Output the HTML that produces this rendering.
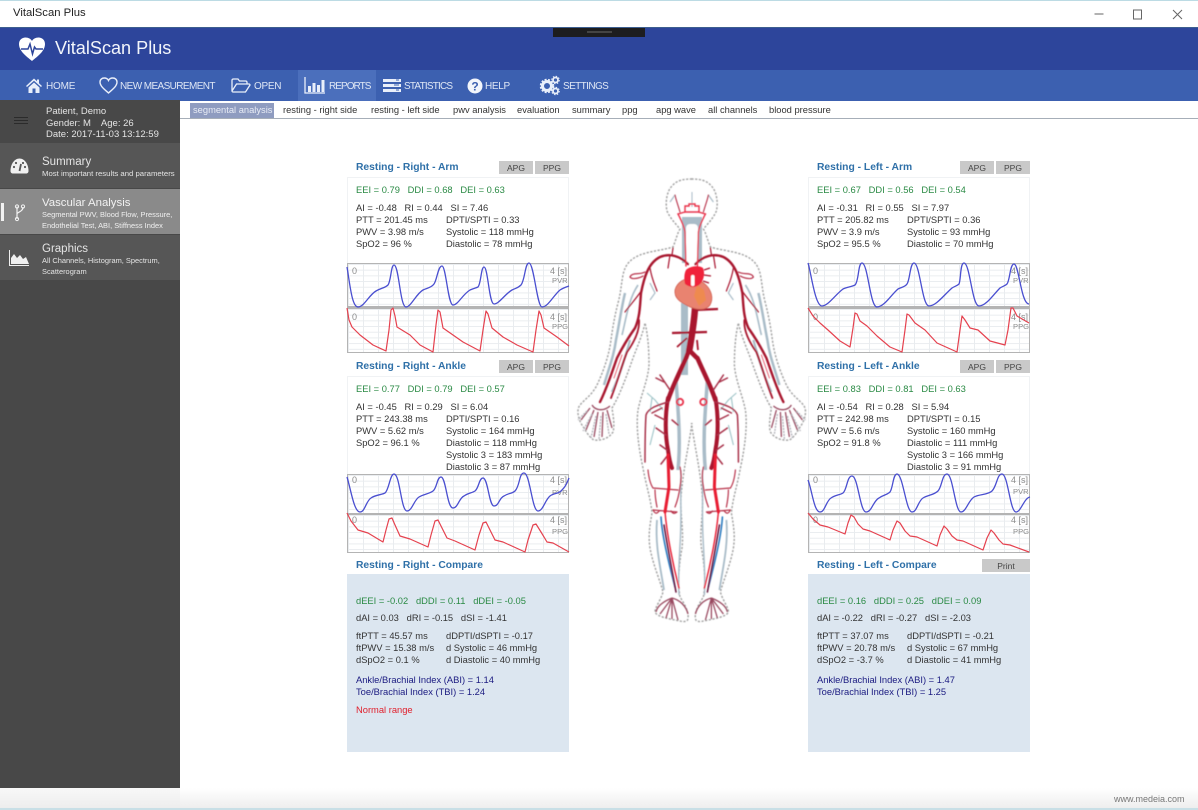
<!DOCTYPE html>
<html><head><meta charset="utf-8"><title>VitalScan Plus</title>
<style>
html,body{margin:0;padding:0}
body{width:1198px;height:810px;position:relative;overflow:hidden;background:#fff;font-family:"Liberation Sans",sans-serif;color:#222}
.a{position:absolute}
.t{position:absolute;font-size:9.35px;line-height:12px;white-space:nowrap;color:#333}
.g{color:#2a8a44}
.n{color:#1a1a80}
.h{position:absolute;font-size:10.3px;line-height:14px;font-weight:bold;color:#2f70a8;white-space:nowrap}
.b{position:absolute;height:13px;background:#c9c9c9;color:#444;font-size:8.5px;line-height:14px;text-align:center}
.nv{position:absolute;top:80px;font-size:10px;line-height:13px;color:#dfe7f5;white-space:nowrap;letter-spacing:-.6px}
.tb{position:absolute;top:104px;font-size:9.35px;line-height:13px;color:#333;white-space:nowrap}
.s{position:absolute;color:#e4e4e4;white-space:nowrap}
.gr{position:absolute;box-sizing:border-box;border:1px solid #b4b4b4;background-color:#fff;background-image:linear-gradient(to right,#e9ecef 1px,transparent 1px),linear-gradient(to bottom,#e9ecef 1px,transparent 1px);background-size:15px 100%,100% 5.7px}
.l{position:absolute;font-size:9px;line-height:10px;color:#8c8c8c;white-space:nowrap}
.m{font-size:7.6px}
.p{position:absolute;background:#fff;border:1px solid #f0f2f4;box-sizing:border-box}
svg{position:absolute;overflow:visible}
</style></head><body>

<!-- window chrome -->
<div class="a" style="left:0;top:0;width:1198px;height:1px;background:#bcdbe4"></div>
<div class="a" style="left:13px;top:7px;font-size:11.3px;line-height:13px;color:#222">VitalScan Plus</div>
<svg style="left:1090px;top:6px" width="100" height="16"><path d="M4.500,8H13.500" stroke="#666" stroke-width="1"/><rect x="43.500" y="4" width="8" height="9" fill="none" stroke="#666"/><path d="M83,4l9,9M92,4l-9,9" stroke="#666" stroke-width="1" fill="none"/></svg>

<!-- header -->
<div class="a" style="left:0;top:27px;width:1198px;height:43px;background:#2d459b;border-top:1px solid #3d5f90;box-sizing:border-box"></div>
<div class="a" style="left:553px;top:28px;width:92px;height:9px;background:#1d1d1f"></div>
<div class="a" style="left:587px;top:31px;width:25px;height:2px;background:#444"></div>
<svg style="left:18px;top:37px" width="28" height="24" viewBox="0 0 28 24"><path d="M14,24C8,19 1,14 1,7C1,3 4,0.500 7.500,0.500C10.500,0.500 13,2 14,4C15,2 17.500,0.500 20.500,0.500C24,0.500 27,3 27,7C27,14 20,19 14,24Z" fill="#fff"/><path d="M3,12H10L12,7L14.500,17L16.500,10L18,12H25" fill="none" stroke="#2d459b" stroke-width="1.500"/></svg>
<div class="a" style="left:55px;top:38px;font-size:18.100px;line-height:20px;color:#f2f5fb;white-space:nowrap">VitalScan Plus</div>

<!-- nav -->
<div class="a" style="left:0;top:70px;width:1198px;height:31px;background:#3c60b0"></div>
<div class="a" style="left:298px;top:70px;width:78px;height:31px;background:#4b6fbc"></div>
<svg style="left:26px;top:78px" width="16" height="15" viewBox="0 0 16 15"><path d="M0,8L8,0.500L11,3.300V1.500H13V5.200L16,8L15,9L8,2.800L1,9Z M2.500,9.500L8,4.500L13.500,9.500V15H9.500V10.500H6.500V15H2.500Z" fill="#e9effa"/></svg>
<div class="nv" style="left:46px;letter-spacing:-.2px">HOME</div>
<svg style="left:99px;top:77px" width="19" height="17" viewBox="0 0 19 17"><path d="M9.500,16C5,12 1,9 1,5C1,2.500 3,1 5.200,1C7,1 8.800,2 9.500,3.500C10.200,2 12,1 13.800,1C16,1 18,2.500 18,5C18,9 14,12 9.500,16Z" fill="none" stroke="#e9effa" stroke-width="1.400"/></svg>
<div class="nv" style="left:120px">NEW MEASUREMENT</div>
<svg style="left:231px;top:78px" width="20" height="15" viewBox="0 0 20 15"><path d="M1,13V2.500C1,1.500 1.500,1 2.500,1H7L8.500,3H14.500C15.500,3 16,3.500 16,4.500V6 M1,13C1,13.500 1.500,14 2,14H14.500L19,7C19,6.500 18.500,6 18,6H5.500L1,13Z" fill="none" stroke="#e9effa" stroke-width="1.300"/></svg>
<div class="nv" style="left:254px;letter-spacing:-.3px">OPEN</div>
<svg style="left:304px;top:77px" width="21" height="17" viewBox="0 0 21 17"><path d="M1,0V16H21" fill="none" stroke="#e9effa" stroke-width="1.300"/><path d="M4,9h3v6H4zM8.500,6h3v9h-3zM13,8h3v7h-3zM17.500,3h3v12h-3z" fill="#e9effa"/></svg>
<div class="nv" style="left:329px;letter-spacing:-.95px">REPORTS</div>
<svg style="left:383px;top:78px" width="18" height="15" viewBox="0 0 18 15"><path d="M0,1h18v3H0zM0,6h18v3H0zM0,11h18v3H0z" fill="#e9effa"/><path d="M13,2h3M11,7h5M13,12h3" stroke="#3c60b0" stroke-width="1"/></svg>
<div class="nv" style="left:404px;letter-spacing:-.8px">STATISTICS</div>
<svg style="left:467px;top:78px" width="16" height="16" viewBox="0 0 16 16"><circle cx="8" cy="8" r="7.500" fill="#f2f5fb"/><text x="8" y="12.500" text-anchor="middle" font-family="Liberation Sans" font-size="12" font-weight="bold" fill="#3c60b0">?</text></svg>
<div class="nv" style="left:485px;letter-spacing:-.3px">HELP</div>
<svg style="left:540px;top:76px" width="20" height="19" viewBox="0 0 20 19"><circle cx="7" cy="10" r="4.500" fill="none" stroke="#e9effa" stroke-width="3"/><circle cx="7" cy="10" r="6.500" fill="none" stroke="#e9effa" stroke-width="1.500" stroke-dasharray="2 1.500"/><circle cx="15.500" cy="4" r="2.500" fill="none" stroke="#e9effa" stroke-width="1.800"/><circle cx="15.500" cy="15" r="2.500" fill="none" stroke="#e9effa" stroke-width="1.800"/><circle cx="15.500" cy="4" r="3.800" fill="none" stroke="#e9effa" stroke-width="1" stroke-dasharray="1.500 1.500"/><circle cx="15.500" cy="15" r="3.800" fill="none" stroke="#e9effa" stroke-width="1" stroke-dasharray="1.500 1.500"/></svg>
<div class="nv" style="left:563px;letter-spacing:-.6px">SETTINGS</div>

<!-- tabs -->
<div class="a" style="left:180px;top:118px;width:1018px;height:1px;background:#a6aeb8"></div>
<div class="a" style="left:190px;top:103px;width:84px;height:15px;background:#8f9cc0"></div>
<div class="tb" style="left:193px;color:#e8ecf5">segmental analysis</div>
<div class="tb" style="left:283px">resting - right side</div>
<div class="tb" style="left:371px">resting - left side</div>
<div class="tb" style="left:453px">pwv analysis</div>
<div class="tb" style="left:517px">evaluation</div>
<div class="tb" style="left:572px">summary</div>
<div class="tb" style="left:622px">ppg</div>
<div class="tb" style="left:656px">apg wave</div>
<div class="tb" style="left:708px">all channels</div>
<div class="tb" style="left:769px">blood pressure</div>

<!-- sidebar -->
<div class="a" style="left:0;top:100px;width:180px;height:688px;background:#484848"></div>
<div class="a" style="left:0;top:143px;width:180px;height:45px;background:#565656"></div>
<div class="a" style="left:0;top:189px;width:180px;height:45px;background:#8a8a8a"></div>
<div class="a" style="left:0;top:235px;width:180px;height:45px;background:#565656"></div>
<div class="a" style="left:1px;top:203px;width:3px;height:18px;background:#f2f2f2"></div>
<svg style="left:14px;top:116px" width="14" height="9"><path d="M0,1.500H14M0,4.500H14M0,7.500H14" stroke="#2b2b2b" stroke-width="1"/></svg>
<div class="s" style="left:46px;top:106px;font-size:9.500px;line-height:11.500px">Patient, Demo<br>Gender: M &nbsp;&nbsp; Age: 26<br>Date: 2017-11-03 13:12:59</div>
<svg style="left:10px;top:158px" width="19" height="16" viewBox="0 0 19 16"><path d="M0.500,13C0.500,6 4.500,0.500 9.500,0.500C14.500,0.500 18.500,6 18.500,13C18.500,14.500 17.500,15.500 16,15.500H3C1.500,15.500 0.500,14.500 0.500,13Z" fill="#f0f0f0"/><path d="M9.500,13L11,6" stroke="#565656" stroke-width="1.800"/><circle cx="4" cy="9" r="1.100" fill="#565656"/><circle cx="6" cy="5" r="1.100" fill="#565656"/><circle cx="13" cy="5" r="1.100" fill="#565656"/><circle cx="15" cy="9" r="1.100" fill="#565656"/></svg>
<div class="s" style="left:42px;top:155px;font-size:11.500px;line-height:14px">Summary</div>
<div class="s" style="left:42px;top:169px;font-size:7.750px;line-height:10px">Most important results and parameters</div>
<svg style="left:14px;top:204px" width="12" height="17" viewBox="0 0 12 17"><path d="M3,2.500V15M3,10C3,8 9,8 9,3" fill="none" stroke="#f2f2f2" stroke-width="1.200"/><circle cx="3" cy="2.500" r="1.600" fill="none" stroke="#f2f2f2"/><circle cx="9" cy="2.500" r="1.600" fill="none" stroke="#f2f2f2"/><circle cx="3" cy="15" r="1.600" fill="none" stroke="#f2f2f2"/></svg>
<div class="s" style="left:42px;top:196px;font-size:11.400px;line-height:14px;color:#f2f2f2">Vascular Analysis</div>
<div class="s" style="left:42px;top:210px;font-size:7.450px;line-height:10.500px;color:#f0f0f0">Segmental PWV, Blood Flow, Pressure,<br>Endothelial Test, ABI, Stiffness Index</div>
<svg style="left:9px;top:250px" width="20" height="16" viewBox="0 0 20 16"><path d="M0.500,0V15.500H20" fill="none" stroke="#f0f0f0" stroke-width="1"/><path d="M2,14V8L5,4L8,8L11,5L14,9L17,7L20,14Z" fill="#f0f0f0"/></svg>
<div class="s" style="left:42px;top:242px;font-size:11.500px;line-height:14px">Graphics</div>
<div class="s" style="left:42px;top:256px;font-size:7.450px;line-height:10.500px">All Channels, Histogram, Spectrum,<br>Scatterogram</div>

<!-- bottom bar -->
<div class="a" style="left:180px;top:788px;width:1018px;height:22px;background:linear-gradient(#fff,#ececec)"></div>
<div class="a" style="left:0;top:788px;width:180px;height:22px;background:linear-gradient(#f8f8f8,#ececec)"></div>
<div class="a" style="left:0;top:808px;width:1198px;height:2px;background:#c8dfe6"></div>
<div class="a" style="left:1114px;top:794px;font-size:9px;line-height:11px;color:#777">www.medeia.com</div>

<!-- panel boxes -->
<div class="p" style="left:347px;top:177px;width:222px;height:87px"></div>
<div class="p" style="left:808px;top:177px;width:222px;height:87px"></div>
<div class="p" style="left:347px;top:376px;width:222px;height:99px"></div>
<div class="p" style="left:808px;top:376px;width:222px;height:99px"></div>
<div class="a" style="left:347px;top:574px;width:222px;height:178px;background:#dce6f0"></div>
<div class="a" style="left:808px;top:574px;width:222px;height:178px;background:#dce6f0"></div>

<!-- graph backgrounds -->
<div class="gr" style="left:347px;top:263px;width:222px;height:45px"></div>
<div class="gr" style="left:347px;top:308px;width:222px;height:45px"></div>
<div class="gr" style="left:808px;top:263px;width:222px;height:45px"></div>
<div class="gr" style="left:808px;top:308px;width:222px;height:45px"></div>
<div class="gr" style="left:347px;top:474px;width:222px;height:40px"></div>
<div class="gr" style="left:347px;top:514px;width:222px;height:39px"></div>
<div class="gr" style="left:808px;top:474px;width:222px;height:40px"></div>
<div class="gr" style="left:808px;top:514px;width:222px;height:39px"></div>
<div class="a" style="left:347px;top:306px;width:222px;height:3px;background:#b4b4b4"></div>
<div class="a" style="left:808px;top:306px;width:222px;height:3px;background:#b4b4b4"></div>

<!-- graph labels -->
<div class="l" style="left:352px;top:266px">0</div><div class="l" style="left:550px;top:266px">4 [s]</div><div class="l m" style="left:552px;top:276px">PVR</div>
<div class="l" style="left:352px;top:312px">0</div><div class="l" style="left:550px;top:312px">4 [s]</div><div class="l m" style="left:552px;top:322px">PPG</div>
<div class="l" style="left:813px;top:266px">0</div><div class="l" style="left:1011px;top:266px">4 [s]</div><div class="l m" style="left:1013px;top:276px">PVR</div>
<div class="l" style="left:813px;top:312px">0</div><div class="l" style="left:1011px;top:312px">4 [s]</div><div class="l m" style="left:1013px;top:322px">PPG</div>
<div class="l" style="left:352px;top:475px">0</div><div class="l" style="left:550px;top:475px">4 [s]</div><div class="l m" style="left:552px;top:488px">PVR</div>
<div class="l" style="left:352px;top:515px">0</div><div class="l" style="left:550px;top:515px">4 [s]</div><div class="l m" style="left:552px;top:527px">PPG</div>
<div class="l" style="left:813px;top:475px">0</div><div class="l" style="left:1011px;top:475px">4 [s]</div><div class="l m" style="left:1013px;top:487px">PVR</div>
<div class="l" style="left:813px;top:515px">0</div><div class="l" style="left:1011px;top:515px">4 [s]</div><div class="l m" style="left:1013px;top:527px">PPG</div>

<!-- waves and body drawing, page coordinates -->
<svg style="left:0;top:0" width="1198" height="810" viewBox="0 0 1198 810">
<defs><filter id="bl" x="-5%" y="-5%" width="110%" height="110%"><feGaussianBlur stdDeviation="0.45"/></filter></defs>
<g fill="none" stroke="#4a4fd0" stroke-width="1.300">
<path d="M347,267 C350,285 352,307 358,307 C364,307 369,295 376,291 C381,288 385,288 388,285 C391,281 391,265 394,265 C399,265 400,307 406,307 C411,307 416,294 423,290 C427,288 431,288 434,284 C437,280 438,266 442,266 C446,266 448,305 453,305 C458,305 462,295 470,290 C474,288 476,288 478,287 C481,284 481,267 484,267 C488,267 489,304 494,304 C499,304 505,294 512,290 C516,288 518,288 521,285 C525,280 525,263 529,263 C534,263 537,307 542,307 C548,307 553,296 560,290 C563,288 566,287 569,286"/>
<path d="M808,263 C811,272 815,306 822,306 C828,306 835,295 843,289 C847,287 851,287 855,285 C859,281 858,263 862,263 C868,263 870,307 877,307 C884,307 891,295 898,289 C902,287 905,287 907,284 C910,280 910,263 914,263 C920,263 922,306 929,306 C936,306 944,295 952,288 C955,286 957,286 959,284 C961,280 960,263 964,263 C970,263 972,306 979,306 C986,306 993,295 1000,288 C1003,286 1005,286 1007,284 C1010,280 1010,264 1014,264 C1019,264 1021,304 1029,304"/>
<path d="M347,477 C351,490 354,512 360,512 C365,512 366,501 371,498 C375,495 381,495 385,493 C389,490 390,474 394,474 C400,474 401,511 407,511 C412,511 414,500 419,497 C424,494 429,494 433,491 C437,488 437,477 441,477 C446,477 447,508 453,508 C458,508 459,498 464,496 C468,493 472,493 475,491 C479,488 479,478 483,478 C488,478 489,506 494,506 C499,506 499,498 504,496 C508,493 512,494 515,491 C520,486 519,473 524,473 C530,473 532,511 538,511 C543,511 545,500 550,496 C554,493 558,494 561,491 C564,488 566,486 569,478"/>
<path d="M808,480 C812,490 814,512 820,512 C825,512 826,501 831,498 C835,495 840,495 843,493 C847,490 847,476 852,476 C858,476 860,512 866,512 C872,512 873,501 879,498 C883,495 887,495 890,492 C893,488 893,474 897,474 C903,474 906,512 912,512 C917,512 918,501 923,498 C928,495 934,495 938,491 C942,487 942,474 947,474 C953,474 955,512 961,512 C966,512 968,501 974,497 C979,494 988,495 992,491 C997,486 997,474 1002,474 C1008,474 1010,512 1016,512 C1021,512 1024,498 1030,497"/>
</g>
<g fill="none" stroke="#e5424f" stroke-width="1.200" stroke-linejoin="round">
<path d="M347,308 L349,320 L352,327 L360,335 L373,345 L386,351 L389,330 L391,310 L393,308 L395,316 L397,327 L410,335 L420,345 L433,352 L436,325 L438,310 L440,312 L443,328 L453,335 L463,342 L480,351 L483,330 L486,311 L488,314 L492,328 L503,337 L517,345 L533,352 L536,330 L539,311 L541,315 L544,328 L557,337 L569,346"/>
<path d="M808,308 L813,316 L820,323 L828,330 L840,341 L850,347 L853,328 L855,313 L857,314 L860,321 L867,326 L877,336 L890,347 L902,352 L905,330 L907,314 L909,315 L915,323 L925,330 L937,343 L957,352 L960,330 L962,316 L965,320 L970,328 L978,330 L990,341 L1005,345 L1008,330 L1011,308 L1013,308 L1017,316 L1029,323"/>
<path d="M347,513 L351,521 L358,530 L368,533 L383,542 L386,530 L389,519 L392,518 L395,525 L400,536 L410,539 L428,547 L431,535 L435,521 L438,520 L442,528 L447,538 L455,541 L475,550 L479,535 L483,523 L486,522 L490,530 L495,540 L503,542 L525,552 L528,540 L533,525 L536,524 L541,532 L547,542 L553,543 L569,552"/>
<path d="M808,513 L813,519 L820,525 L828,527 L845,534 L848,523 L851,515 L854,517 L858,524 L863,529 L870,531 L890,540 L893,530 L897,521 L900,523 L905,531 L910,536 L917,537 L937,546 L940,535 L944,526 L947,529 L952,536 L957,540 L963,541 L983,550 L987,538 L991,530 L994,533 L999,540 L1003,544 L1010,545 L1029,552"/>
</g>

<g filter="url(#bl)">
<!-- body: centre -->
<rect x="681" y="303" width="7" height="72" fill="#a9bcc8"/>
<rect x="682" y="217" width="20" height="46" fill="#a9bcc8"/>
<rect x="686" y="224" width="12" height="40" rx="4" fill="#fff"/>
<path d="M692,192V207" stroke="#a9bcc8" stroke-width="1" fill="none"/>
<path d="M685,212V206H689V204H695V206H699V212Z" fill="none" stroke="#e8304a" stroke-width="1.400"/>
<g id="half">
<path d="M692,179 C684,179 677,180 672,186 C667,191 665,202 667,211 C670,218 675,223 680,229 C677,234 676,240 673,247 C664,250 650,251 640,255 C630,259 625,265 623,275 C621,285 621,292 618,303 C615,315 613,325 611,340 C609,355 604,370 597,385 C592,395 585,399 580,405 C576,410 578,420 584,428 C588,435 592,440 595,440 C603,441 610,437 613,432 C615,425 613,415 612,408 C620,395 627,375 633,358 C638,345 643,333 645,323 C648,335 649,350 649,365 C648,380 641,395 638,410 C636,425 638,445 643,468 C646,485 651,500 652,513 C650,525 648,535 650,548 C653,565 660,580 663,592 C661,600 655,607 655,612 C657,617 670,619 680,621 C684,622 688,622 688,618 C689,612 684,603 680,597 C678,585 678,570 682,548 C684,530 680,515 681,497 C683,470 689,445 692,423" fill="none" stroke="#a0a0a0" stroke-width="1.400" stroke-dasharray="2.200 1.500"/>
<g fill="none" stroke="#a9bcc8">
<path d="M625,293 C621,310 620,320 616,340 C614,355 610,365 604,385" stroke-width="2.500"/>
<path d="M638,285 C628,300 626,320 622,335" stroke-width="1.600"/>
<path d="M630,340 C626,355 620,375 612,392" stroke-width="2.200"/>
<path d="M676,380 C678,410 681,440 678,470" stroke-width="3.500"/>
<path d="M681,470 C680,490 682,515 680,545 C679,565 678,580 679,595" stroke-width="1.400"/>
<path d="M657,520 C655,545 660,565 664,590" stroke-width="1.800"/>
<path d="M647,393 L655,400 L663,410 M652,398 L650,412 M655,425 L650,445" stroke="#9fc4c8" stroke-width="1.100"/>
<path d="M675,195 L670,202 M650,283 L655,293 L650,300" stroke-width="1.200"/>
</g>
<g fill="none" stroke="#a8162e" stroke-linecap="round">
<path d="M688,264 C680,256 670,253 660,257 C648,263 644,278 641,293 C640,305 640,317 635,328 C628,338 622,348 617,358 C612,372 607,388 600,402" stroke-width="2.400"/>
<path d="M639,320 C640,332 632,345 627,352 C622,365 618,380 611,398" stroke-width="1.800"/>
<path d="M645,272 C640,275 632,272 630,277 C632,280 640,278 643,276" stroke-width="1.200" stroke="#b8324a"/>
<path d="M642,290 C635,300 630,305 625,312" stroke-width="1.200"/>
<path d="M650,268 C652,280 655,285 657,291" stroke-width="1.200"/>
<path d="M672,255 L673,248 M670,255 L668,268" stroke-width="1.200"/>
<path d="M622,355 L614,378" stroke="#e86070" stroke-width="1"/>
<path d="M686,266 L685,232 C684,225 680,218 678,214 L685,212" stroke="#e8304a" stroke-width="1.400"/>
<path d="M680,212 C678,205 676,200 675,195" stroke="#b8324a" stroke-width="1.100"/>
<path d="M686,358 C680,372 673,385 668,400" stroke-width="4.500"/>
<path d="M668,398 C665,415 665,435 668,450 C669,458 670,463 672,468" stroke-width="4"/>
<path d="M668,402 C658,405 648,408 646,415 C645,430 645,445 645,462" stroke="#a8324a" stroke-width="1.500"/>
<path d="M665,420 L655,415 M666,435 L656,428 M667,450 L660,445 M668,455 L661,464 M672,420 L678,425 M670,390 L660,375 M664,382 L656,378 M662,408 L652,413" stroke="#a8324a" stroke-width="1.500"/>
<path d="M648,470 C649,480 651,485 653,488 L678,490 M653,510 L677,512 M655,490 C655,497 656,502 657,507 M680,467 C682,475 681,482 680,487 C679,495 677,502 675,507 M653,510 C655,514 657,514 659,511 M677,512 C675,514 673,514 671,511" stroke="#b8324a" stroke-width="1.200"/>
<path d="M668,455 L669,487 L665,512" stroke="#e81f33" stroke-width="3"/>
<path d="M661,517 C662,535 668,560 675,587" stroke="#2a7cc0" stroke-width="1.600"/>
<path d="M664,525 C668,550 672,570 676,592" stroke="#6a1a40" stroke-width="1.600"/>
<path d="M665,512 C667,535 673,565 679,588" stroke="#e81f33" stroke-width="1.400"/>
<circle cx="680" cy="402" r="3.200" stroke="#e8304a" stroke-width="1.800"/>
</g>
<g fill="none" stroke="#9a4a60" stroke-width="1.300">
<path d="M592,405 C595,410 603,412 610,406 M590,408 L581,420 M594,410 L586,430 M598,412 L594,437 M603,412 L602,437 M607,410 L612,428"/>
<path d="M672,598 C662,602 657,607 656,612 M672,598 L660,614 M672,598 L666,618 M672,598 L672,619 M672,598 L678,620 M672,598 C680,600 686,606 688,614"/>
</g>
<g fill="none" stroke="#b4b4bc" stroke-width="1.400" stroke-dasharray="2 1">
<path d="M587,411 L578,420 M592,414 L583,431 M596,416 L591,438 M601,416 L599,439 M606,414 L609,434"/>
</g>
</g>
<use href="#half" transform="translate(1383.400,0) scale(-1,1)"/>

<!-- body: heart and aorta -->
<g fill="none" stroke="#a8162e">
<path d="M695,308 C694,325 691,340 689,352" stroke-width="6.500"/>
<path d="M689,350 L686,358 M689,350 L697,358" stroke-width="4.500"/>
<path d="M695,310 L718,309 M672,333 L707,332" stroke-width="2.200"/>
<path d="M677,347 L687,338 M698,350 L697,340" stroke-width="1.800"/>
</g>
<path d="M692,278 C685,278 677,282 675,290 C674,298 680,302 688,306 C696,310 706,311 710,305 C714,298 711,290 706,285 C702,281 697,279 692,278Z" fill="#e9836f" stroke="#d06055" stroke-width=".8"/>
<path d="M697,285 L704,290 L706,300 L699,306 L694,296Z" fill="#ee8a50"/>
<path d="M686,270 C690,266 699,265 703,268 C705,273 704,279 701,283 C697,288 690,288 685,284 C684,279 684,274 686,270Z" fill="#f0203a"/>
<rect x="691" y="275" width="3.500" height="11" rx="1.500" fill="#fff"/>
<path d="M704,270 L710,268 M704,275 L711,276 M703,281 L709,283" stroke="#a8162e" stroke-width="1.200" fill="none"/>
</g>
</svg>

<!-- RIGHT ARM -->
<div class="h" style="left:356px;top:161px">Resting - Right - Arm</div>
<div class="b" style="left:499px;top:161px;width:34px">APG</div><div class="b" style="left:535px;top:161px;width:34px">PPG</div>
<div class="t g" style="left:356px;top:184px">EEI = 0.79 &nbsp; DDI = 0.68 &nbsp; DEI = 0.63</div>
<div class="t" style="left:356px;top:202px">AI = -0.48 &nbsp; RI = 0.44 &nbsp; SI = 7.46</div>
<div class="t" style="left:356px;top:214px">PTT = 201.45 ms</div><div class="t" style="left:446px;top:214px">DPTI/SPTI = 0.33</div>
<div class="t" style="left:356px;top:226px">PWV = 3.98 m/s</div><div class="t" style="left:446px;top:226px">Systolic = 118 mmHg</div>
<div class="t" style="left:356px;top:238px">SpO2 = 96 %</div><div class="t" style="left:446px;top:238px">Diastolic = 78 mmHg</div>

<!-- LEFT ARM -->
<div class="h" style="left:817px;top:161px">Resting - Left - Arm</div>
<div class="b" style="left:960px;top:161px;width:34px">APG</div><div class="b" style="left:996px;top:161px;width:34px">PPG</div>
<div class="t g" style="left:817px;top:184px">EEI = 0.67 &nbsp; DDI = 0.56 &nbsp; DEI = 0.54</div>
<div class="t" style="left:817px;top:202px">AI = -0.31 &nbsp; RI = 0.55 &nbsp; SI = 7.97</div>
<div class="t" style="left:817px;top:214px">PTT = 205.82 ms</div><div class="t" style="left:907px;top:214px">DPTI/SPTI = 0.36</div>
<div class="t" style="left:817px;top:226px">PWV = 3.9 m/s</div><div class="t" style="left:907px;top:226px">Systolic = 93 mmHg</div>
<div class="t" style="left:817px;top:238px">SpO2 = 95.5 %</div><div class="t" style="left:907px;top:238px">Diastolic = 70 mmHg</div>

<!-- RIGHT ANKLE -->
<div class="h" style="left:356px;top:360px">Resting - Right - Ankle</div>
<div class="b" style="left:499px;top:360px;width:34px">APG</div><div class="b" style="left:535px;top:360px;width:34px">PPG</div>
<div class="t g" style="left:356px;top:383px">EEI = 0.77 &nbsp; DDI = 0.79 &nbsp; DEI = 0.57</div>
<div class="t" style="left:356px;top:401px">AI = -0.45 &nbsp; RI = 0.29 &nbsp; SI = 6.04</div>
<div class="t" style="left:356px;top:413px">PTT = 243.38 ms</div><div class="t" style="left:446px;top:413px">DPTI/SPTI = 0.16</div>
<div class="t" style="left:356px;top:425px">PWV = 5.62 m/s</div><div class="t" style="left:446px;top:425px">Systolic = 164 mmHg</div>
<div class="t" style="left:356px;top:437px">SpO2 = 96.1 %</div><div class="t" style="left:446px;top:437px">Diastolic = 118 mmHg</div>
<div class="t" style="left:446px;top:449px">Systolic 3 = 183 mmHg</div>
<div class="t" style="left:446px;top:461px">Diastolic 3 = 87 mmHg</div>

<!-- LEFT ANKLE -->
<div class="h" style="left:817px;top:360px">Resting - Left - Ankle</div>
<div class="b" style="left:960px;top:360px;width:34px">APG</div><div class="b" style="left:996px;top:360px;width:34px">PPG</div>
<div class="t g" style="left:817px;top:383px">EEI = 0.83 &nbsp; DDI = 0.81 &nbsp; DEI = 0.63</div>
<div class="t" style="left:817px;top:401px">AI = -0.54 &nbsp; RI = 0.28 &nbsp; SI = 5.94</div>
<div class="t" style="left:817px;top:413px">PTT = 242.98 ms</div><div class="t" style="left:907px;top:413px">DPTI/SPTI = 0.15</div>
<div class="t" style="left:817px;top:425px">PWV = 5.6 m/s</div><div class="t" style="left:907px;top:425px">Systolic = 160 mmHg</div>
<div class="t" style="left:817px;top:437px">SpO2 = 91.8 %</div><div class="t" style="left:907px;top:437px">Diastolic = 111 mmHg</div>
<div class="t" style="left:907px;top:449px">Systolic 3 = 166 mmHg</div>
<div class="t" style="left:907px;top:461px">Diastolic 3 = 91 mmHg</div>

<!-- RIGHT COMPARE -->
<div class="h" style="left:356px;top:559px">Resting - Right - Compare</div>
<div class="t g" style="left:356px;top:595px">dEEI = -0.02 &nbsp; dDDI = 0.11 &nbsp; dDEI = -0.05</div>
<div class="t" style="left:356px;top:612px">dAI = 0.03 &nbsp; dRI = -0.15 &nbsp; dSI = -1.41</div>
<div class="t" style="left:356px;top:630px">ftPTT = 45.57 ms</div><div class="t" style="left:446px;top:630px">dDPTI/dSPTI = -0.17</div>
<div class="t" style="left:356px;top:642px">ftPWV = 15.38 m/s</div><div class="t" style="left:446px;top:642px">d Systolic = 46 mmHg</div>
<div class="t" style="left:356px;top:654px">dSpO2 = 0.1 %</div><div class="t" style="left:446px;top:654px">d Diastolic = 40 mmHg</div>
<div class="t n" style="left:356px;top:674px">Ankle/Brachial Index (ABI) = 1.14</div>
<div class="t n" style="left:356px;top:686px">Toe/Brachial Index (TBI) = 1.24</div>
<div class="t" style="left:356px;top:704px;color:#e0202c">Normal range</div>

<!-- LEFT COMPARE -->
<div class="h" style="left:817px;top:559px">Resting - Left - Compare</div>
<div class="b" style="left:982px;top:559px;width:48px">Print</div>
<div class="t g" style="left:817px;top:595px">dEEI = 0.16 &nbsp; dDDI = 0.25 &nbsp; dDEI = 0.09</div>
<div class="t" style="left:817px;top:612px">dAI = -0.22 &nbsp; dRI = -0.27 &nbsp; dSI = -2.03</div>
<div class="t" style="left:817px;top:630px">ftPTT = 37.07 ms</div><div class="t" style="left:907px;top:630px">dDPTI/dSPTI = -0.21</div>
<div class="t" style="left:817px;top:642px">ftPWV = 20.78 m/s</div><div class="t" style="left:907px;top:642px">d Systolic = 67 mmHg</div>
<div class="t" style="left:817px;top:654px">dSpO2 = -3.7 %</div><div class="t" style="left:907px;top:654px">d Diastolic = 41 mmHg</div>
<div class="t n" style="left:817px;top:674px">Ankle/Brachial Index (ABI) = 1.47</div>
<div class="t n" style="left:817px;top:686px">Toe/Brachial Index (TBI) = 1.25</div>

</body></html>
